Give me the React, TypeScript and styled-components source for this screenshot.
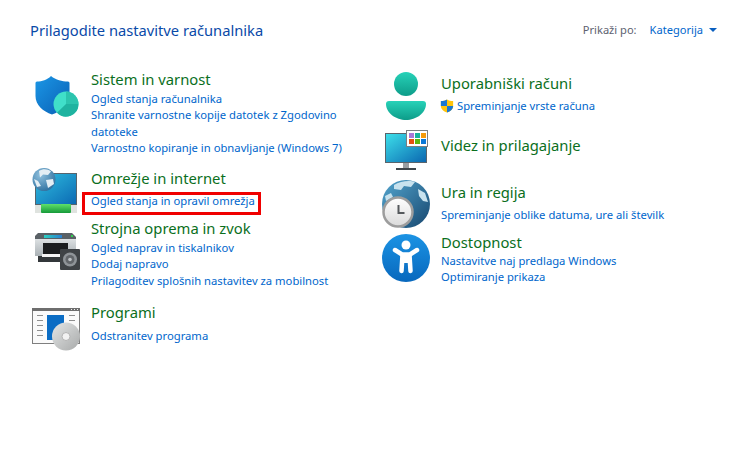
import styled, { createGlobalStyle } from 'styled-components';

const GlobalStyle = createGlobalStyle`
  html, body {
    margin: 0;
    padding: 0;
    background: #fff;
    font-family: "Noto Sans", "Liberation Sans", sans-serif;
  }
`;

function ShieldIcon() {
  return (
    <svg width="48" height="48" viewBox="0 0 48 48">
      <defs>
        <linearGradient id="sh1" x1="0" y1="0" x2="1" y2="1">
          <stop offset="0" stopColor="#1b97e6" />
          <stop offset="1" stopColor="#0a5fb4" />
        </linearGradient>
      </defs>
      <path d="M19 4 C24 8 30 9.500 36 9.500 Q37.500 9.500 37.500 11 L37.500 24 C37.500 33 29 39.500 20 42.500 C11 39.500 3.500 33 3.500 24 L3.500 11 Q3.500 9.500 5 9.500 C10 9.500 15 8 19 4 Z" fill="url(#sh1)" />
      <circle cx="34" cy="32" r="12.500" fill="#40dfc9" />
      <path d="M34 32 L46.500 32 A12.500 12.500 0 0 1 25 40.800 Z" fill="#1fb3a0" />
      <path d="M34 32 L34 19.500 A12.500 12.500 0 0 1 46.500 32 Z" fill="#2cc4ae" />
    </svg>
  );
}

function NetworkIcon() {
  return (
    <svg width="48" height="48" viewBox="0 0 48 48">
      <defs>
        <linearGradient id="nw1" x1="0" y1="0" x2="1" y2="1">
          <stop offset="0" stopColor="#30bfe0" />
          <stop offset="1" stopColor="#0b69b3" />
        </linearGradient>
        <linearGradient id="nw2" x1="0" y1="0" x2="0" y2="1">
          <stop offset="0" stopColor="#5fe06a" />
          <stop offset="1" stopColor="#169a3a" />
        </linearGradient>
        <radialGradient id="nw3" cx="0.35" cy="0.3" r="0.8">
          <stop offset="0" stopColor="#8fc0dd" />
          <stop offset="1" stopColor="#2a6c9c" />
        </radialGradient>
      </defs>
      <rect x="3.500" y="5.500" width="41" height="31" fill="url(#nw1)" stroke="#56646e" strokeWidth="1" />
      <rect x="3" y="37" width="42" height="8" fill="#dfe3df" />
      <rect x="9" y="36" width="30" height="9" rx="1" fill="url(#nw2)" />
      <circle cx="12" cy="11.500" r="11.500" fill="url(#nw3)" />
      <path d="M7 3 C11 0.500 16 1 19 3.500 L16 7 L11 6.500 L8 9.500 Z M2 11 L6 13 L9 18 L5 19 Z M14 12 L21 11 L22 16 L16 20 Z" fill="#e4eef4" />
    </svg>
  );
}

function PrinterIcon() {
  return (
    <svg width="48" height="48" viewBox="0 0 48 48">
      <defs>
        <linearGradient id="pr1" x1="0" y1="0" x2="1" y2="0">
          <stop offset="0" stopColor="#2bd0c0" />
          <stop offset="1" stopColor="#2a7fd0" />
        </linearGradient>
        <linearGradient id="pr2" x1="0" y1="0" x2="0" y2="1">
          <stop offset="0" stopColor="#dde1e3" />
          <stop offset="1" stopColor="#aab1b5" />
        </linearGradient>
      </defs>
      <path d="M6 4 L40 4 L44 8 L44 10 L3 10 L3 7 Z" fill="#5a6166" />
      <rect x="12" y="6" width="18" height="3" fill="url(#pr1)" />
      <rect x="3" y="10" width="41" height="17" fill="url(#pr2)" />
      <rect x="11" y="14" width="25" height="12" fill="#1b1d1f" />
      <rect x="6" y="27" width="28" height="6" fill="#33373a" />
      <rect x="10" y="25" width="24" height="3" fill="#f4f4f4" />
      <rect x="39" y="6" width="2" height="2" fill="#32d050" />
      <rect x="28" y="20" width="20" height="21" rx="1" fill="#3f4346" />
      <circle cx="38" cy="30.500" r="7" fill="#8f9498" />
      <circle cx="38" cy="30.500" r="4.500" fill="#62666a" />
      <circle cx="38" cy="30.500" r="1.800" fill="#bcc0c3" />
    </svg>
  );
}

function ProgramsIcon() {
  return (
    <svg width="48" height="48" viewBox="0 0 48 48">
      <defs>
        <linearGradient id="pg1" x1="0" y1="0" x2="1" y2="1">
          <stop offset="0" stopColor="#e4e6e6" />
          <stop offset="0.5" stopColor="#c6c8c8" />
          <stop offset="1" stopColor="#a8aaaa" />
        </linearGradient>
      </defs>
      <rect x="0.500" y="3.500" width="47" height="35" fill="#fafafa" stroke="#7f7f7f" />
      <rect x="0" y="3" width="48" height="3" fill="#6e6e6e" />
      <rect x="39" y="4" width="1" height="1" fill="#eee" />
      <rect x="42" y="4" width="1" height="1" fill="#eee" />
      <rect x="45" y="4" width="1" height="1" fill="#eee" />
      <rect x="5" y="10" width="6" height="1" fill="#8f8f8f" />
      <rect x="5" y="15" width="6" height="1" fill="#8f8f8f" />
      <rect x="5" y="20" width="6" height="1" fill="#8f8f8f" />
      <rect x="5" y="25" width="6" height="1" fill="#8f8f8f" />
      <rect x="5" y="30" width="6" height="1" fill="#8f8f8f" />
      <rect x="37" y="10" width="6" height="1" fill="#8f8f8f" />
      <rect x="37" y="15" width="6" height="1" fill="#8f8f8f" />
      <rect x="15" y="10" width="17" height="25" fill="#0a6cc4" />
      <circle cx="34" cy="31.500" r="14" fill="url(#pg1)" />
      <circle cx="34" cy="31.500" r="4" fill="#f2f2f2" stroke="#b4b4b4" />
    </svg>
  );
}

function UserIcon() {
  return (
    <svg width="48" height="48" viewBox="0 0 48 48">
      <defs>
        <linearGradient id="us1" x1="0" y1="0" x2="0" y2="1">
          <stop offset="0" stopColor="#27d2b8" />
          <stop offset="1" stopColor="#0d9c89" />
        </linearGradient>
      </defs>
      <circle cx="24" cy="12" r="12" fill="url(#us1)" />
      <path d="M7 29 L41 29 Q44 29 44 32 C44 41 34 48 24 48 C14 48 4 41 4 32 Q4 29 7 29 Z" fill="url(#us1)" />
    </svg>
  );
}

function DisplayIcon() {
  return (
    <svg width="48" height="48" viewBox="0 0 48 48">
      <defs>
        <linearGradient id="dp1" x1="0" y1="0" x2="1" y2="1">
          <stop offset="0" stopColor="#3de0ea" />
          <stop offset="1" stopColor="#0a66b0" />
        </linearGradient>
      </defs>
      <rect x="3.500" y="7.500" width="41" height="29" fill="url(#dp1)" stroke="#59646c" />
      <rect x="21" y="37" width="6" height="5" fill="#9a9fa3" />
      <rect x="14" y="42" width="20" height="2" fill="#3f464b" />
      <rect x="24.500" y="4.500" width="21" height="16" fill="#fff" stroke="#7b7f82" />
      <rect x="27" y="7" width="5" height="5" fill="#a878d8" />
      <rect x="33" y="7" width="5" height="5" fill="#17b39c" />
      <rect x="39" y="7" width="5" height="5" fill="#f59a0a" />
      <rect x="27" y="13" width="5" height="5" fill="#e5500f" />
      <rect x="33" y="13" width="5" height="5" fill="#5cb80e" />
      <rect x="39" y="13" width="5" height="5" fill="#0a78d8" />
    </svg>
  );
}

function ClockIcon() {
  return (
    <svg width="48" height="48" viewBox="0 0 48 48">
      <defs>
        <linearGradient id="cl1" x1="0" y1="0" x2="1" y2="1">
          <stop offset="0" stopColor="#54a6cf" />
          <stop offset="1" stopColor="#16466e" />
        </linearGradient>
        <linearGradient id="cl2" x1="0" y1="0" x2="0" y2="1">
          <stop offset="0" stopColor="#ffffff" />
          <stop offset="1" stopColor="#dadada" />
        </linearGradient>
      </defs>
      <circle cx="24" cy="24" r="24" fill="url(#cl1)" />
      <path d="M12 5 C18 1 28 0 33 2 L29 7 L22 6 L19 10 L12 9 Z M36 9 L43 13 L46 22 L41 21 L37 16 Z M3 16 L9 13 L11 17 L4 21 Z" fill="#c8e2ee" />
      <circle cx="16" cy="32" r="14.500" fill="url(#cl2)" stroke="#9d9d9d" strokeWidth="2.500" />
      <path d="M16.500 25 L16.500 33 L22.500 33" fill="none" stroke="#55595c" strokeWidth="2" />
    </svg>
  );
}

function AccessIcon() {
  return (
    <svg width="48" height="48" viewBox="0 0 48 48">
      <defs>
        <linearGradient id="ac1" x1="0" y1="0" x2="0" y2="1">
          <stop offset="0" stopColor="#1b93e4" />
          <stop offset="1" stopColor="#0868bd" />
        </linearGradient>
      </defs>
      <circle cx="24" cy="24" r="24" fill="url(#ac1)" />
      <circle cx="24" cy="11" r="4.500" fill="#fff" />
      <path d="M13 16 L20 20.500 L28 20.500 L35 16" fill="none" stroke="#fff" strokeWidth="4.500" strokeLinecap="round" strokeLinejoin="round" />
      <path d="M20.500 21 L19.500 37 M27.500 21 L28.500 37" fill="none" stroke="#fff" strokeWidth="4.500" strokeLinecap="round" />
      <rect x="20" y="20" width="8" height="9" fill="#fff" />
    </svg>
  );
}

function UacShield() {
  return (
    <svg width="14" height="14" viewBox="0 0 15 16">
      <path d="M7.500 0.500 C9.500 1.800 11.800 2.300 14.500 2.300 L14.500 8 C14.500 11.500 11.500 14 7.500 15.500 C3.500 14 0.500 11.500 0.500 8 L0.500 2.300 C3.200 2.300 5.500 1.800 7.500 0.500 Z" fill="#ffc40c" />
      <path d="M7.500 0.500 C5.500 1.800 3.200 2.300 0.500 2.300 L0.500 8 L7.500 8 Z" fill="#1877d2" />
      <path d="M7.500 8 L14.500 8 C14.500 11.500 11.500 14 7.500 15.500 Z" fill="#1877d2" />
    </svg>
  );
}

const Page = styled.div`
  width: 742px;
  height: 476px;
  box-sizing: border-box;
  padding: 19px 25px 0 30px;
  overflow: hidden;
`;

const TopBar = styled.header`
  display: flex;
  justify-content: space-between;
  align-items: center;
  height: 21px;
`;

const Title = styled.h1`
  margin: 0;
  font-size: 14.700px;
  font-weight: 400;
  color: #0a4aa8;
`;

const ViewBy = styled.div`
  display: flex;
  align-items: center;
  font-size: 11.100px;
`;

const ViewLabel = styled.span`
  color: #5d6270;
  margin-right: 13px;
`;

const ViewValue = styled.a`
  color: #0066cc;
  margin-right: 6px;
`;

const Caret = styled.span`
  width: 0;
  height: 0;
  border-left: 4px solid transparent;
  border-right: 4px solid transparent;
  border-top: 4px solid #0a5fc0;
`;

const Columns = styled.main`
  display: flex;
`;

const Column = styled.div<{ $width: number }>`
  width: ${(p) => p.$width}px;
  display: flex;
  flex-direction: column;
  padding-left: 2px;
  box-sizing: border-box;
`;

const Item = styled.section<{ $top: number }>`
  display: flex;
  margin-top: ${(p) => p.$top}px;
`;

const IconBox = styled.div<{ $offset?: number }>`
  width: 48px;
  height: 48px;
  flex-shrink: 0;
  margin-right: 11px;
  margin-top: ${(p) => p.$offset ?? 0}px;
`;

const Body = styled.div<{ $pad?: number }>`
  width: 262px;
  padding-top: ${(p) => p.$pad ?? 0}px;
`;

const Heading = styled.h2<{ $after?: number }>`
  margin: 0 0 ${(p) => p.$after ?? 0}px;
  font-size: 14.800px;
  line-height: 18px;
  font-weight: 400;
  color: #0b6f1d;
`;

const TaskLink = styled.a`
  display: block;
  font-size: 11.250px;
  line-height: 16.400px;
  color: #0066cc;
`;

const ShieldLink = styled(TaskLink)`
  display: flex;
  align-items: center;
  gap: 3px;
  margin-left: -1px;
`;

const Marked = styled(TaskLink)`
  position: relative;
  &::after {
    content: '';
    position: absolute;
    left: -9px;
    top: -1px;
    width: 173px;
    height: 17px;
    border: 3px solid #f00000;
  }
`;

export default function App() {
  return (
    <Page>
      <GlobalStyle />
      <TopBar>
        <Title>Prilagodite nastavitve računalnika</Title>
        <ViewBy>
          <ViewLabel>Prikaži po:</ViewLabel>
          <ViewValue>Kategorija</ViewValue>
          <Caret />
        </ViewBy>
      </TopBar>
      <Columns>
        <Column $width={350}>
          <Item $top={30}>
            <IconBox $offset={2}><ShieldIcon /></IconBox>
            <Body>
              <Heading $after={3}>Sistem in varnost</Heading>
              <TaskLink>Ogled stanja računalnika</TaskLink>
              <TaskLink>Shranite varnostne kopije datotek z Zgodovino datoteke</TaskLink>
              <TaskLink>Varnostno kopiranje in obnavljanje (Windows 7)</TaskLink>
            </Body>
          </Item>
          <Item $top={11.400}>
            <IconBox><NetworkIcon /></IconBox>
            <Body $pad={1}>
              <Heading $after={6}>Omrežje in internet</Heading>
              <Marked>Ogled stanja in opravil omrežja</Marked>
            </Body>
          </Item>
          <Item $top={3}>
            <IconBox $offset={10}><PrinterIcon /></IconBox>
            <Body>
              <Heading $after={3}>Strojna oprema in zvok</Heading>
              <TaskLink>Ogled naprav in tiskalnikov</TaskLink>
              <TaskLink>Dodaj napravo</TaskLink>
              <TaskLink>Prilagoditev splošnih nastavitev za mobilnost</TaskLink>
            </Body>
          </Item>
          <Item $top={13.800}>
            <IconBox $offset={2}><ProgramsIcon /></IconBox>
            <Body>
              <Heading $after={7}>Programi</Heading>
              <TaskLink>Odstranitev programa</TaskLink>
            </Body>
          </Item>
        </Column>
        <Column $width={332}>
          <Item $top={32}>
            <IconBox><UserIcon /></IconBox>
            <Body $pad={2}>
              <Heading $after={6}>Uporabniški računi</Heading>
              <ShieldLink><UacShield />Spreminjanje vrste računa</ShieldLink>
            </Body>
          </Item>
          <Item $top={6}>
            <IconBox><DisplayIcon /></IconBox>
            <Body $pad={10}>
              <Heading>Videz in prilagajanje</Heading>
            </Body>
          </Item>
          <Item $top={6}>
            <IconBox><ClockIcon /></IconBox>
            <Body $pad={3}>
              <Heading $after={6}>Ura in regija</Heading>
              <TaskLink>Spreminjanje oblike datuma, ure ali številk</TaskLink>
            </Body>
          </Item>
          <Item $top={5}>
            <IconBox $offset={1}><AccessIcon /></IconBox>
            <Body>
              <Heading $after={2}>Dostopnost</Heading>
              <TaskLink>Nastavitve naj predlaga Windows</TaskLink>
              <TaskLink>Optimiranje prikaza</TaskLink>
            </Body>
          </Item>
        </Column>
      </Columns>
    </Page>
  );
}
